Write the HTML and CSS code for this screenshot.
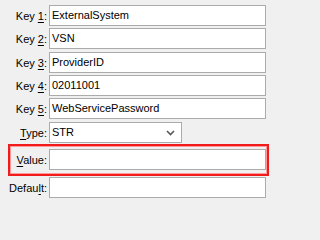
FILE: index.html
```html
<!DOCTYPE html>
<html>
<head>
<meta charset="utf-8">
<link rel="stylesheet" href="styles.css">
</head>
<body>
<div class="form">
  <div class="row r1"><label class="lbl">Key <u>1</u>:</label><div class="field">ExternalSystem</div></div>
  <div class="row r2"><label class="lbl">Key <u>2</u>:</label><div class="field">VSN</div></div>
  <div class="row r3"><label class="lbl">Key <u>3</u>:</label><div class="field">ProviderID</div></div>
  <div class="row r4"><label class="lbl">Key <u>4</u>:</label><div class="field">02011001</div></div>
  <div class="row r5"><label class="lbl">Key <u>5</u>:</label><div class="field">WebServicePassword</div></div>
  <div class="row r6"><label class="lbl"><u>T</u>ype:</label>
    <div class="combo"><span>STR</span>
      <svg class="chev" width="9" height="6" viewBox="0 0 9 6"><path d="M1 1 L4.5 4.5 L8 1" fill="none" stroke="#5a5a5a" stroke-width="1.6"/></svg>
    </div>
  </div>
  <div class="row r7 highlight"><label class="lbl"><u>V</u>alue:</label><div class="field"></div></div>
  <div class="row r8"><label class="lbl">Defau<u>l</u>t:</label><div class="field"></div></div>
</div>
</body>
</html>
```
FILE: styles.css
```css
html, body {
  margin: 0;
  padding: 0;
  background: #f0f0f0;
}
body {
  width: 271px;
  height: 202px;
  overflow: hidden;
  font-family: "Liberation Sans", Arial, sans-serif;
  font-size: 11px;
  color: #000;
}
.form {
  display: flex;
  flex-direction: column;
  padding-top: 5px;
}
.row {
  display: grid;
  grid-template-columns: 49px 217px;
  height: 21px;
  align-items: center;
}
.r2 { margin-top: 2px; }
.r3 { margin-top: 3px; }
.r4 { margin-top: 2px; }
.r5 { margin-top: 2px; }
.r6 { margin-top: 3px; }
.r7 { margin-top: 6px; }
.r8 { margin-top: 7px; }
.lbl {
  text-align: right;
  padding-right: 2px;
  white-space: nowrap;
}
.lbl u {
  text-decoration-thickness: 1px;
  text-underline-offset: 2px;
}
.field {
  box-sizing: border-box;
  height: 21px;
  border: 1px solid #ababab;
  background: #fff;
  padding: 0 0 0 2px;
  line-height: 19px;
  white-space: nowrap;
  overflow: hidden;
}
.combo {
  box-sizing: border-box;
  width: 133px;
  height: 21px;
  border: 1px solid #ababab;
  background: #fff;
  padding: 0 0 0 2px;
  line-height: 19px;
  display: flex;
  justify-content: space-between;
  align-items: center;
}
.chev {
  margin-right: 6px;
}
.highlight {
  position: relative;
}
.highlight::after {
  content: "";
  position: absolute;
  left: 8px;
  width: 261px;
  top: -5px;
  bottom: -6px;
  box-sizing: border-box;
  border: 2px solid #f21b1b;
  box-shadow: inset 0 0 0 1px #ff9a9a;
  pointer-events: none;
}
```
